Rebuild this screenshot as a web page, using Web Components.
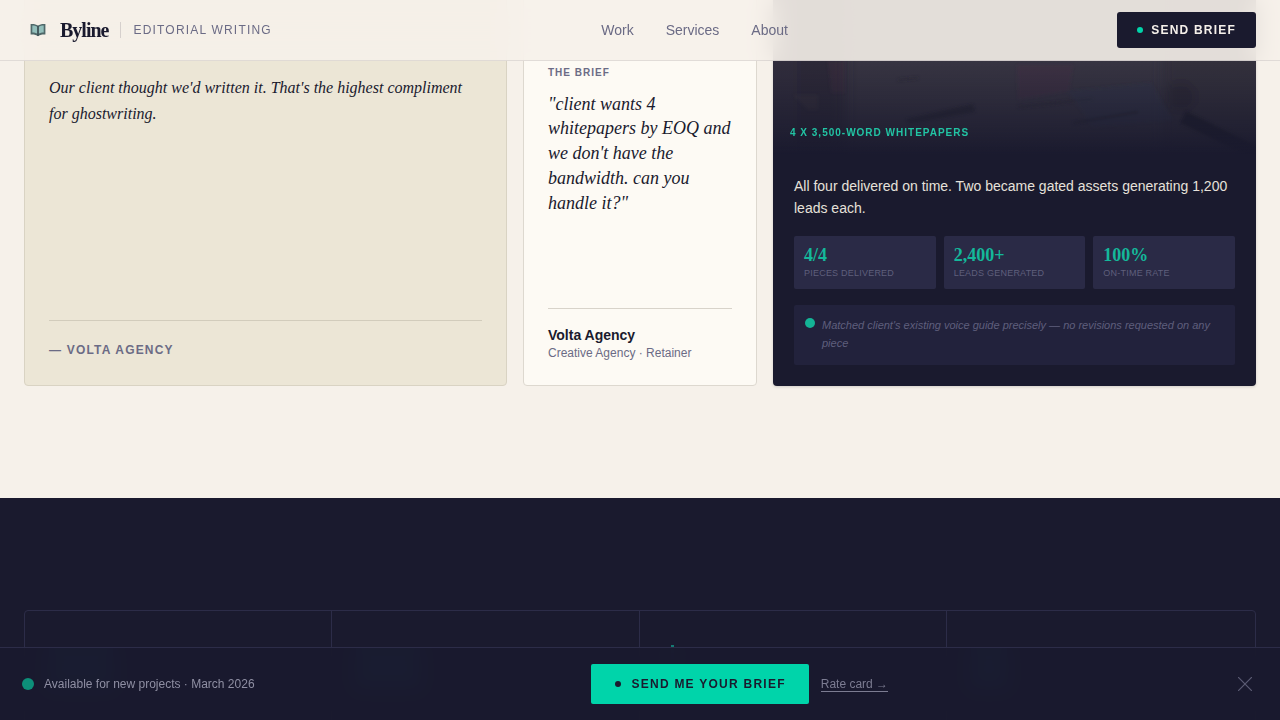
<!DOCTYPE html>
<html lang="en"><head><meta charset="utf-8"><title>Byline</title>
<style>
html,body{margin:0;padding:0;background:#f6f1ea;overflow:hidden;height:720px}
body{font-family:"Liberation Sans",Arial,sans-serif;color:#1a1a2e}
</style></head><body>
<template id="t-nav"><style>
:host{position:fixed;top:0;left:0;right:0;height:60px;z-index:10;display:flex;align-items:center;justify-content:space-between;padding:0 24px;background:rgba(246,241,234,.9);backdrop-filter:blur(12px);border-bottom:1px solid rgba(26,26,46,.1);box-sizing:content-box}
.brand{display:flex;align-items:center}
.ico{width:18px;height:14px;margin:0 4px 0 5px;display:block}
.name{font:700 20px "Liberation Serif",serif;letter-spacing:-1px;margin-left:9px;color:#1a1a2e}
.sep{width:1px;height:16px;background:rgba(26,26,46,.15);margin:0 12px}
.tag{font-size:12px;letter-spacing:1.2px;color:#6b6b85}
.links{display:flex;gap:32px;font:14px "Liberation Sans",sans-serif;color:#6b6b85}
.btn{display:flex;align-items:center;gap:8px;height:36px;padding:0 20px;background:#1a1a2e;color:#f5f0ea;border-radius:3px;font:700 12px "Liberation Sans",sans-serif;letter-spacing:1.2px;box-sizing:border-box}
.dot{width:6px;height:6px;border-radius:50%;background:#00d4aa}
</style>
<div class="brand"><svg class="ico" viewBox="0 0 18 14"><path d="M9 2.600C7.300 1.200 4.400.7 1.600 1v10.600c2.800-.3 5.700.2 7.400 1.700 1.700-1.500 4.600-2 7.400-1.700V1C13.600.7 10.700 1.200 9 2.600Z" fill="#4f6869"/><path d="M3.300 2.500c1.900 0 3.700.5 4.900 1.300v6.800c-1.300-.7-3-1.100-4.900-1.100Zm11.400 0c-1.900 0-3.700.5-4.900 1.300v6.800c1.300-.7 3-1.100 4.900-1.100Z" fill="#93bfbb"/><path d="M9 3v10" stroke="#33424a" stroke-width="1"/></svg>
<span class="name">Byline</span><span class="sep"></span><span class="tag">EDITORIAL WRITING</span></div>
<div class="links"><span>Work</span><span>Services</span><span>About</span></div>
<div class="btn"><span class="dot"></span>SEND BRIEF</div>
</template>

<template id="t-quote"><style>
:host{display:flex;flex-direction:column;box-sizing:border-box;background:#ece6d6;border:1px solid #d9d3c3;border-radius:4px;padding:0 24px 26px;flex:0 0 483px}
.q{font:italic 16px/26px "Liberation Serif",serif;color:#1a1a2e;margin:0;padding-top:169px;flex:1}
.by{border-top:1px solid #d2ccbc;padding-top:20px;font-weight:700;font-size:12px;line-height:18px;letter-spacing:1.2px;color:#6b6b85}
</style><p class="q"><slot name="q"></slot></p><div class="by"><slot name="by"></slot></div></template>

<template id="t-brief"><style>
:host{display:flex;flex-direction:column;box-sizing:border-box;background:#fdfaf4;border:1px solid #ddd8cf;border-radius:4px;padding:0 24px 23px;flex:0 0 234px}
.l{font-weight:700;font-size:10px;line-height:14px;letter-spacing:1px;color:#6b6b85;padding-top:160px;margin-bottom:11.6px}
.q{font:italic 18px/24.75px "Liberation Serif",serif;margin:0;color:#1a1a2e;flex:1}
.f{border-top:1px solid #d8d3ca;padding-top:17px}
.n{font-weight:700;font-size:14px;line-height:18px}
.s{font-size:12px;line-height:17px;color:#6b6b85;margin-top:1px}
</style><div class="l">THE BRIEF</div><p class="q"><slot name="q"></slot></p><div class="f"><div class="n"><slot name="n"></slot></div><div class="s"><slot name="s"></slot></div></div></template>

<template id="t-result"><style>
:host{display:block;flex:1;background:#1a1a2e;border-radius:4px;overflow:hidden;box-shadow:0 1px 3px rgba(0,0,0,.15)}
.img{height:250px;position:relative;overflow:hidden;background:#3a3744}
.img svg{display:block;width:100%;height:100%}
.img .ov{position:absolute;inset:0;background:linear-gradient(to bottom,rgba(26,26,46,.03) 62%,rgba(26,26,46,.42) 78%,rgba(26,26,46,.72) 90%,#1a1a2e 100%)}
.lab{position:absolute;left:17px;bottom:15px;font:700 10px/14px "Liberation Sans",sans-serif;letter-spacing:1px;color:#22c4a4}
.b{padding:20px 21px}
.t{font-size:14px;line-height:22px;color:#e6e1da;margin:0 0 17px}
.g{display:grid;grid-template-columns:repeat(3,1fr);gap:8px;margin-bottom:16px}
.n{display:flex;gap:7px;background:#22223c;border-radius:2px;padding:11px 12px 11px 11px;height:60px;box-sizing:border-box}
.d{width:10px;height:10px;border-radius:50%;background:#14b496;flex:none;margin-top:2px}
.x{font:italic 11px/18px "Liberation Sans",sans-serif;color:#5f5f7c}
</style><div class="img"><svg viewBox="0 0 483 250" preserveAspectRatio="none" aria-hidden="true"><defs><filter id="bl" x="-20%" y="-20%" width="140%" height="140%"><feGaussianBlur stdDeviation="6"/></filter><filter id="bl2" x="-20%" y="-20%" width="140%" height="140%"><feGaussianBlur stdDeviation="1.800"/></filter></defs>
<rect width="483" height="250" fill="#393643"/>
<g filter="url(#bl)"><rect x="-10" y="-10" width="34" height="270" fill="#312f3c"/><rect x="24" y="-10" width="48" height="270" fill="#2e2c39"/>
<rect x="390" y="-10" width="103" height="270" fill="#34313d"/><circle cx="408" cy="192" r="15" fill="#2e2c36"/></g>
<g filter="url(#bl2)"><path d="M244 160H300L296 186 245 195Z" fill="#4c3048" opacity=".3"/><path d="M245 202 L320 194" stroke="#2c2734" stroke-width="2" fill="none" opacity=".7"/><path d="M295 186 L378 178 L400 215 L320 222Z" fill="#2f3a50" opacity=".4"/><path d="M300 218 L365 207" stroke="#23252f" stroke-width="2.500" fill="none" opacity=".7"/><path d="M133 214 L200 199 L202 207 L136 219Z" fill="#25232d" opacity=".7"/><path d="M125 175 L145 173" stroke="#2b2933" stroke-width="1.500" fill="none" opacity=".7"/><path d="M410 212 L483 248" stroke="#1b1a24" stroke-width="14" fill="none" opacity=".8"/><path d="M20 190 H45 V205 H35Z" fill="#4a4642" opacity=".25"/><path d="M55 156 H72 V188 H58Z" fill="#4c2d42" opacity=".25"/></g></svg>
<div class="ov"></div><div class="lab"><slot name="lab"></slot></div></div>
<div class="b"><p class="t"><slot name="t"></slot></p><div class="g"><slot name="m"></slot></div><div class="n"><span class="d"></span><span class="x"><slot name="x"></slot></span></div></div></template>

<template id="t-metric"><style>
:host{display:block;background:#2a2a46;border-radius:2px;padding:9px 10px 0;height:53px;box-sizing:border-box}
.v{font:700 18px/21px "Liberation Serif",serif;color:#14b89a}
.k{font-size:9px;line-height:12px;letter-spacing:.22px;color:#5f5f7c;margin-top:1px}
</style><div class="v"><slot name="v"></slot></div><div class="k"><slot name="k"></slot></div></template>

<template id="t-cases"><style>
:host{display:flex;gap:16px;margin:-95px 24px 0;height:481px}
</style><slot></slot></template>

<template id="t-dark"><style>
:host{display:block;margin-top:112px;background:#1a1a2e;height:222px;padding:112px 24px 0;box-sizing:border-box;overflow:hidden}
.g{display:grid;grid-template-columns:307px 308px 307px 1fr;height:200px;border:1px solid #2c2c48;border-radius:4px;box-sizing:border-box}
.c{border-right:1px solid #2c2c48;padding:37px 24px 0}
.c:last-child{border-right:0}
.p{height:40px;width:64px;background:#0b6474}
</style><div class="g"><div class="c"><div class="p"></div></div><div class="c"><div class="p"></div></div><div class="c"><div class="p" style="width:3px;margin:-3px 0 0 7px;height:20px;background:#157a72"></div></div><div class="c"><div class="p" style="width:36px"></div></div></div></template>

<template id="t-bar"><style>
:host{position:fixed;left:0;right:0;bottom:0;height:73px;z-index:10;background:rgba(26,26,46,.97);backdrop-filter:blur(8px);border-top:1px solid #2c2c48;box-sizing:border-box;display:flex;justify-content:space-between;align-items:center;padding:0 15px 0 22px}
.l{display:flex;align-items:center;gap:10px;font:12px "Liberation Sans",sans-serif;color:#8f8fa3}
.d{width:12px;height:12px;border-radius:50%;background:#0d8f79}
.m{display:flex;align-items:center;gap:12px}
.c{display:flex;align-items:center;gap:10px;height:40px;padding:0 23px 0 24px;background:#00d4aa;color:#1a1a2e;border-radius:2px;font:700 12px "Liberation Sans",sans-serif;letter-spacing:1.25px;box-sizing:border-box}
.cd{width:6px;height:6px;border-radius:50%;background:#1a1a2e}
.r{font:12px "Liberation Sans",sans-serif;color:#7c7c92;border-bottom:1px solid #7c7c92;line-height:14px;margin-top:1px}
.xb{width:40px;display:flex;justify-content:center}
.x{display:block;width:14px;height:14px}
</style><div class="l"><span class="d"></span><span>Available for new projects · March 2026</span></div>
<div class="m"><div class="c"><span class="cd"></span>SEND ME YOUR BRIEF</div><span class="r">Rate card →</span></div>
<div class="xb"><svg class="x" viewBox="0 0 14 14"><path d="M0 0l14 14M14 0L0 14" stroke="#5c5c74" stroke-width="1.200" fill="none"/></svg></div></template>

<script>
function def(name,tid){customElements.define(name,class extends HTMLElement{constructor(){super();this.attachShadow({mode:'open'}).appendChild(document.getElementById(tid).content.cloneNode(true))}})}
[['bl-nav','t-nav'],['bl-quote','t-quote'],['bl-brief','t-brief'],['bl-result','t-result'],['bl-metric','t-metric'],['bl-cases','t-cases'],['bl-dark','t-dark'],['bl-bar','t-bar']].forEach(a=>def(a[0],a[1]));
</script>
<bl-nav></bl-nav>
<bl-cases>
<bl-quote><span slot="q">Our client thought we'd written it. That's the highest compliment for ghostwriting.</span><span slot="by">— VOLTA AGENCY</span></bl-quote>
<bl-brief><span slot="q">"client wants 4 whitepapers by EOQ and we don't have the bandwidth. can you handle it?"</span><span slot="n">Volta Agency</span><span slot="s">Creative Agency · Retainer</span></bl-brief>
<bl-result><span slot="lab">4 X 3,500-WORD WHITEPAPERS</span><span slot="t">All four delivered on time. Two became gated assets generating 1,200 leads each.</span>
<bl-metric slot="m"><span slot="v">4/4</span><span slot="k">PIECES DELIVERED</span></bl-metric>
<bl-metric slot="m"><span slot="v">2,400+</span><span slot="k">LEADS GENERATED</span></bl-metric>
<bl-metric slot="m"><span slot="v">100%</span><span slot="k">ON-TIME RATE</span></bl-metric>
<span slot="x">Matched client's existing voice guide precisely — no revisions requested on any piece</span></bl-result>
</bl-cases>
<bl-dark></bl-dark>
<bl-bar></bl-bar>
</body></html>
